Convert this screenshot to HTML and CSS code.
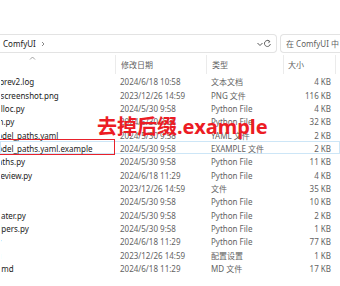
FILE: index.html
```html
<!DOCTYPE html>
<html lang="zh-CN">
<head>
    <meta charset="UTF-8">
    <title>ComfyUI - 文件资源管理器</title>
    <link rel="stylesheet" href="styles.css">
</head>
<body>
    <div class="window">
        <div class="toolbar"></div>

        <!-- Address + search -->
        <div class="nav-row">
            <div class="address">
                <span class="crumb">ComfyUI</span>
                <svg class="crumb-sep" width="6" height="6" viewBox="0 0 6 6"><path d="M2 1 L4 3 L2 5" fill="none" stroke="#6b6b6b" stroke-width="0.8"/></svg>
                <span class="spacer"></span>
                <svg class="addr-btn" width="8" height="8" viewBox="0 0 8 8"><path d="M1.5 3 L4 5.5 L6.5 3" fill="none" stroke="#444" stroke-width="0.9"/></svg>
            </div>
            <svg class="refresh" width="9" height="9" viewBox="0 0 9 9"><path d="M6.6 2.4 A3 3 0 1 0 7.4 5" fill="none" stroke="#555" stroke-width="0.9"/><path d="M4.6 1.2 L6.8 2.4 L5.4 4.2" fill="none" stroke="#555" stroke-width="0.9"/></svg>
            <div class="search">在 ComfyUI 中</div>
        </div>

        <!-- Column headers -->
        <div class="header">
            <div class="col-name"><svg class="sort" width="7" height="4" viewBox="0 0 7 4"><path d="M1 3.5 L3.5 1 L6 3.5" fill="none" stroke="#8a8a8a" stroke-width="0.8"/></svg></div>
            <div class="col">修改日期</div>
            <div class="col">类型</div>
            <div class="col">大小</div>
            <div class="col"></div>
        </div>

        <!-- Files -->
        <div class="files">
            <div class="row"><div class="name"><span>comfyui.prev2.log</span></div><div class="cell">2024/6/18 10:58</div><div class="cell">文本文档</div><div class="cell size">4 KB</div></div>
            <div class="row"><div class="name"><span>comfyui_screenshot.png</span></div><div class="cell">2023/12/26 14:59</div><div class="cell">PNG 文件</div><div class="cell size">116 KB</div></div>
            <div class="row"><div class="name"><span>cuda_malloc.py</span></div><div class="cell">2024/5/30 9:58</div><div class="cell">Python File</div><div class="cell size">4 KB</div></div>
            <div class="row"><div class="name"><span>execution.py</span></div><div class="cell">2024/5/30 9:58</div><div class="cell">Python File</div><div class="cell size">32 KB</div></div>
            <div class="row"><div class="name"><span>extra_model_paths.yaml</span></div><div class="cell">2024/5/30 9:58</div><div class="cell">YAML 文件</div><div class="cell size">2 KB</div></div>
            <div class="row selected"><div class="name"><span>extra_model_paths.yaml.example</span></div><div class="cell">2024/5/30 9:58</div><div class="cell">EXAMPLE 文件</div><div class="cell size">2 KB</div></div>
            <div class="row"><div class="name"><span>folder_paths.py</span></div><div class="cell">2024/5/30 9:58</div><div class="cell">Python File</div><div class="cell size">11 KB</div></div>
            <div class="row"><div class="name"><span>latent_preview.py</span></div><div class="cell">2024/6/18 11:29</div><div class="cell">Python File</div><div class="cell size">4 KB</div></div>
            <div class="row"><div class="name"><span>LICENSE</span></div><div class="cell">2023/12/26 14:59</div><div class="cell">文件</div><div class="cell size">35 KB</div></div>
            <div class="row"><div class="name"><span>main.py</span></div><div class="cell">2024/5/30 9:58</div><div class="cell">Python File</div><div class="cell size">10 KB</div></div>
            <div class="row"><div class="name"><span>new_updater.py</span></div><div class="cell">2024/5/30 9:58</div><div class="cell">Python File</div><div class="cell size">2 KB</div></div>
            <div class="row"><div class="name"><span>node_helpers.py</span></div><div class="cell">2024/5/30 9:58</div><div class="cell">Python File</div><div class="cell size">1 KB</div></div>
            <div class="row"><div class="name"><span>nodes.py</span></div><div class="cell">2024/6/18 11:29</div><div class="cell">Python File</div><div class="cell size">77 KB</div></div>
            <div class="row"><div class="name"><span>pytest.ini</span></div><div class="cell">2023/12/26 14:59</div><div class="cell">配置设置</div><div class="cell size">1 KB</div></div>
            <div class="row"><div class="name"><span>README.md</span></div><div class="cell">2024/6/18 11:29</div><div class="cell">MD 文件</div><div class="cell size">17 KB</div></div>
        </div>

        <!-- Annotation drawn over the screenshot -->
        <div class="mark-box"></div>
        <div class="mark-text">去掉后缀.example</div>
    </div>
</body>
</html>
```

FILE: styles.css
```css
* {
    box-sizing: border-box;
    margin: 0;
    padding: 0;
}

body {
    font-family: 'Noto Sans', 'Noto Sans CJK SC', sans-serif;
    font-size: 8px;
    color: #1b1b1b;
    background: #fff;
    overflow: hidden;
}

.window {
    position: relative;
    width: 340px;
    height: 286px;
    overflow: hidden;
}

.toolbar {
    height: 34px;
}

.nav-row {
    display: flex;
    align-items: center;
    height: 19px;
}

.address {
    flex: 0 0 277px;
    height: 19px;
    display: flex;
    align-items: center;
    border: 1px solid #e3e3e3;
    border-left: none;
    border-radius: 0 4px 4px 0;
    padding-left: 3px;
    padding-right: 12px;
}

.crumb {
    color: #1b1b1b;
}

.crumb-sep {
    margin-left: 4px;
}

.spacer {
    flex: 1;
}

.refresh {
    margin-left: -14px;
    margin-right: 8px;
}

.search {
    flex: 1;
    height: 19px;
    display: flex;
    align-items: center;
    border: 1px solid #e3e3e3;
    border-right: none;
    border-radius: 4px 0 0 4px;
    padding-left: 5px;
    color: #5f5f5f;
    white-space: nowrap;
    overflow: hidden;
}

.header,
.row {
    display: grid;
    grid-template-columns: 115px 91px 77px 52px 5px;
}

.header {
    margin-top: 2px;
    height: 19.3px;
    color: #5f5f5f;
}

.header .col,
.header .col-name {
    display: flex;
    align-items: center;
    padding-left: 5px;
    border-left: 1px solid #ebebeb;
}

.header .col-name {
    border-left: none;
    align-items: flex-start;
    padding-left: 29px;
    padding-top: 1px;
}

.header .col:nth-child(4) {
    padding-left: 4px;
}

.row {
    height: 13.34px;
    align-items: center;
    line-height: 13px;
    border: 1px solid transparent;
}

.row.selected {
    border-color: #cde6f7;
}

.name {
    overflow: hidden;
    white-space: nowrap;
    color: #1b1b1b;
}

.name span {
    display: inline-block;
    margin-left: -34px;
}

.cell {
    padding-left: 4px;
    color: #636363;
    white-space: nowrap;
}

.cell.size {
    text-align: right;
    padding-right: 5px;
}

/* Red note drawn over the screenshot */
.mark-box {
    position: absolute;
    left: -2px;
    top: 139px;
    width: 117px;
    height: 16px;
    border: 1.5px solid #e8212b;
}

.mark-text {
    position: absolute;
    left: 97px;
    top: 113px;
    font-size: 20px;
    font-weight: 700;
    line-height: 28px;
    color: #ec1c24;
    white-space: nowrap;
}
```
